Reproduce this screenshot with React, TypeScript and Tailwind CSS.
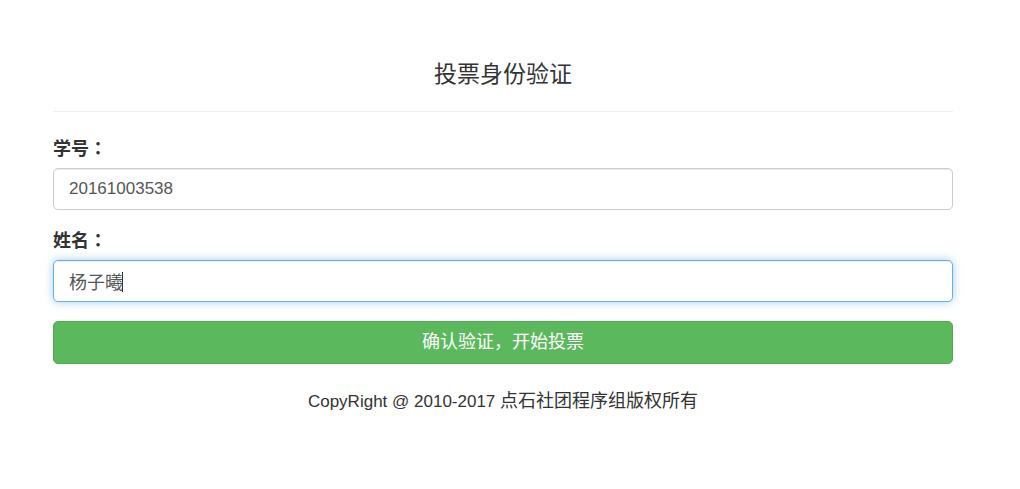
import { useState } from "react";
import type { FormEvent } from "react";

const inputClass =
  "block h-[42px] w-full rounded-[5px] border border-[#cccccc] bg-white px-[15px] text-[#555555] caret-transparent shadow-[inset_0_1px_1px_rgba(0,0,0,0.075)] outline-none focus:border-[#66afe9] focus:shadow-[inset_0_1px_1px_rgba(0,0,0,0.075),0_0_10px_rgba(102,175,233,0.6)]";

type FieldProps = {
  id: string;
  label: string;
  value: string;
  size: string;
  glyphWidth: number;
  autoFocus?: boolean;
  onChange: (value: string) => void;
};

function Field({ id, label, value, size, glyphWidth, autoFocus, onChange }: FieldProps) {
  return (
    <div className="mb-[19px]">
      <label htmlFor={id} className="mb-[6px] block text-[18px] leading-[25px] font-bold">
        {label}
        <span lang="ja" className="leading-none font-['Noto_Sans_CJK_JP',sans-serif]">：</span>
      </label>
      <div className="relative">
        <input
          id={id}
          type="text"
          value={value}
          autoFocus={autoFocus}
          onChange={(e) => onChange(e.target.value)}
          className={`peer ${inputClass} ${size}`}
        />
        {/* Steady text cursor after the last character */}
        <span
          aria-hidden="true"
          className="pointer-events-none absolute top-[12px] hidden h-[20px] w-px bg-[#333333] peer-focus:block"
          style={{ left: 15 + value.length * glyphWidth }}
        />
      </div>
    </div>
  );
}

export default function App() {
  const [studentId, setStudentId] = useState("20161003538");
  const [name, setName] = useState("杨子曦");
  const submit = (e: FormEvent) => e.preventDefault();

  return (
    <main
      lang="zh-CN"
      className="bg-white pt-[56px] pr-[67px] pb-12 pl-[53px] font-['Liberation_Sans','Noto_Sans_CJK_SC',sans-serif] text-[#333333]"
    >
      <h1 className="border-b border-[#eeeeee] pb-[19px] text-center text-[23px] leading-[36px]">
        投票身份验证
      </h1>
      <form onSubmit={submit} className="pt-[25px]">
        <Field
          id="student-id"
          label="学号"
          value={studentId}
          size="text-[17px]"
          glyphWidth={9}
          onChange={setStudentId}
        />
        <Field
          id="student-name"
          label="姓名"
          value={name}
          size="text-[18px]"
          glyphWidth={18}
          autoFocus
          onChange={setName}
        />
        <button
          type="submit"
          className="block h-[43px] w-full rounded-[5px] border border-[#4cae4c] bg-[#5cb85c] text-[18px] text-white"
        >
          确认验证，开始投票
        </button>
      </form>
      <footer className="mt-[24px] text-center text-[17px] leading-[26px]">
        CopyRight @ 2010-2017 <span className="text-[18px]">点石社团程序组版权所有</span>
      </footer>
    </main>
  );
}
